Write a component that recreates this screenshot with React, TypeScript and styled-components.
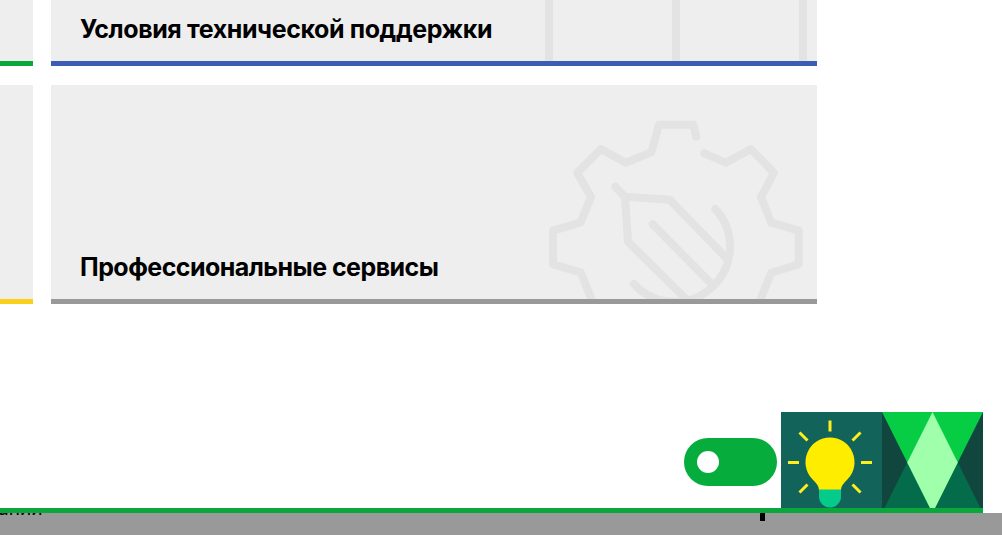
import styled, { createGlobalStyle } from 'styled-components';

interface ICard {
  accent: string;
}

interface ITitle {
  $tracking: number;
}

const RAYS = [
  'M49 8.5V19.5',
  'M18.5 20.5L26.5 28.5',
  'M79.5 20.5L71.5 28.5',
  'M7 50.5H18',
  'M80 50.5H91',
  'M18.5 80.5L26.5 72.5',
  'M79.5 80.5L71.5 72.5',
];

const ColumnsIcon = () => (
  <CardArt viewBox="0 0 270 61" width={270} height={61}>
    <path d="M5 -4V65M132 -4V65M259 -4V65" />
  </CardArt>
);

const GearPenIcon = () => (
  <CardArt viewBox="0 0 270 214" width={270} height={214}>
    <path d="M152.3 51.7L149.3 39.7H115L107.3 67.3L81.7 77.7L57 64L33.3 87.7L47 112L36.7 137.3L9 145.7V179.3L36.7 187.3L49 218" />
    <path d="M160.3 68.3L181.7 77.7L206.7 64L230 87.7L217 112L227.3 137.7L254.7 145.7V179.3L227.3 187.7L215 218" />
    <path d="M71.3 101.7L81 111.7L125.7 114.7L183.3 174" />
    <path d="M81 111.7L84 156.7L144 216" />
    <path d="M108.7 139.3L169.3 200.7" />
    <path d="M90 199A54.5 54.5 0 1 0 171.3 124" />
  </CardArt>
);

const BulbTile = () => (
  <Tile viewBox="0 0 101 96">
    <rect width="101" height="96" fill="#12645b" />
    <path d={RAYS.join('')} stroke="#ffee1e" strokeWidth="3" />
    <path
      d="M49 25.5A24.6 24.6 0 0 0 31.2 67C36 72 38 74 38 79H60C60 74 62 72 66.8 67A24.6 24.6 0 0 0 49 25.5Z"
      fill="#ffed00"
    />
    <path d="M38 77.5H60V84.5A11 11 0 0 1 38 84.5Z" fill="#04cb89" />
  </Tile>
);

const DiamondTile = () => (
  <Tile viewBox="0 0 101 96">
    <rect width="101" height="96" fill="#11463f" />
    <path d="M50.5 0L101 101H0Z" fill="#046c4b" />
    <path d="M0 0H101L50.5 101Z" fill="#06cd44" />
    <path d="M50.5 0L75.75 50.5L50.5 101L25.25 50.5Z" fill="#9fffaa" />
  </Tile>
);

const App = () => {
  return (
    <Page>
      <GlobalStyle />
      <Grid>
        <EdgeCard accent="#0aa83c" />
        <Card accent="#3c5db5">
          <ColumnsIcon />
          <Title $tracking={-0.4}>Условия технической поддержки</Title>
        </Card>
        <EdgeCard accent="#fccf1a" />
        <Card accent="#999999">
          <GearPenIcon />
          <Title $tracking={-0.54}>Профессиональные сервисы</Title>
        </Card>
      </Grid>
      <Banner>
        <Toggle>
          <Knob />
        </Toggle>
        <BulbTile />
        <DiamondTile />
      </Banner>
      <Footer>
        <Clipped>
          <span>ании</span>
        </Clipped>
        <Marker />
      </Footer>
    </Page>
  );
};
export default App;

const GlobalStyle = createGlobalStyle`
  body {
    margin: 0;
    background: #fff;
    overflow: hidden;
  }
`;

const Page = styled.div`
  display: flex;
  flex-direction: column;
  width: 1002px;
  height: 535px;
  overflow: hidden;
  color: #000;
  font-family: Inter, 'Liberation Sans', sans-serif;
`;

const Grid = styled.main`
  display: grid;
  grid-template-columns: 33px 766px;
  grid-template-rows: 66px 219px;
  gap: 19px 18px;
  height: 412px;
  flex: none;
`;

const Card = styled.section<ICard>`
  position: relative;
  display: flex;
  align-items: flex-end;
  box-sizing: border-box;
  padding: 0 29px 15px;
  overflow: hidden;
  background: #eee;
  border-bottom: 5px solid ${({ accent }) => accent};
`;

const EdgeCard = styled(Card)`
  padding: 0;
`;

const CardArt = styled.svg`
  position: absolute;
  right: 3px;
  bottom: 0;
  fill: none;
  stroke: #e3e3e3;
  stroke-width: 8px;
  stroke-linecap: round;
  stroke-linejoin: round;
`;

const Title = styled.h2<ITitle>`
  position: relative;
  margin: 0;
  font-size: 25px;
  font-weight: 700;
  line-height: 34px;
  letter-spacing: ${({ $tracking }) => $tracking}px;
  white-space: nowrap;
`;

const Banner = styled.div`
  display: flex;
  justify-content: flex-end;
  align-items: center;
  flex: none;
  width: 983px;
  height: 96px;
  border-bottom: 5px solid #0aa83c;
`;

const Toggle = styled.div`
  display: flex;
  align-items: center;
  box-sizing: border-box;
  width: 93px;
  height: 48px;
  margin: 4px 4px 0 0;
  padding-left: 13px;
  border-radius: 24px;
  background: #06ac3c;
`;

const Knob = styled.span`
  width: 22px;
  height: 22px;
  border-radius: 50%;
  background: #fff;
`;

const Tile = styled.svg`
  display: block;
  width: 101px;
  height: 96px;
`;

const Footer = styled.footer`
  display: flex;
  justify-content: space-between;
  flex: 1;
  box-sizing: border-box;
  padding-right: 237px;
  background: #999;
`;

const Clipped = styled.div`
  display: flex;
  align-items: flex-end;
  width: 62px;
  height: 3px;
  margin-left: -2px;
  overflow: hidden;
  font-size: 19px;
  line-height: 14px;
`;

const Marker = styled.span`
  width: 5px;
  height: 8px;
  background: #000;
`;
